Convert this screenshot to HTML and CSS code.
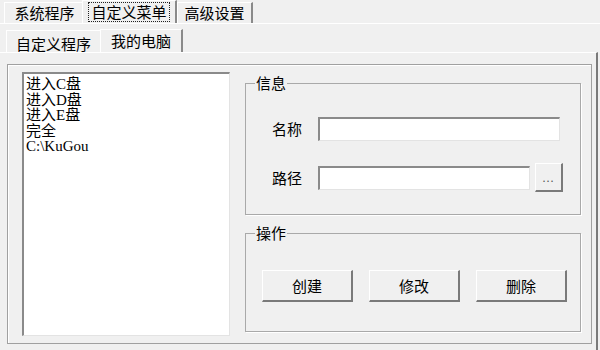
FILE: index.html
```html
<!DOCTYPE html>
<html lang="zh-CN">
<head>
    <meta charset="UTF-8">
    <title>自定义菜单</title>
    <link rel="stylesheet" href="styles.css">
</head>
<body>
    <!-- Top tab strip -->
    <div class="tabstrip tabstrip-top">
        <div class="tab tab-sys">系统程序</div>
        <div class="tab tab-menu active"><span class="focus">自定义菜单</span></div>
        <div class="tab tab-adv">高级设置</div>
    </div>

    <!-- Page of the selected tab -->
    <div class="page">
        <div class="tabstrip tabstrip-sub">
            <div class="tab tab-prog">自定义程序</div>
            <div class="tab tab-pc active">我的电脑</div>
        </div>

        <div class="sub-page">
            <div class="frame">
                <div class="listbox">
                    <div class="item">进入C盘</div>
                    <div class="item">进入D盘</div>
                    <div class="item">进入E盘</div>
                    <div class="item">完全</div>
                    <div class="item">C:\KuGou</div>
                </div>

                <div class="side">
                    <fieldset class="group group-info">
                        <legend>信息</legend>
                        <div class="row">
                            <span class="label">名称</span>
                            <div class="input input-name"></div>
                        </div>
                        <div class="row row-path">
                            <span class="label">路径</span>
                            <div class="input input-path"></div>
                            <div class="btn btn-browse">...</div>
                        </div>
                    </fieldset>

                    <fieldset class="group group-ops">
                        <legend>操作</legend>
                        <div class="buttons">
                            <div class="btn">创建</div>
                            <div class="btn">修改</div>
                            <div class="btn">删除</div>
                        </div>
                    </fieldset>
                </div>
            </div>
        </div>
    </div>
</body>
</html>
```

FILE: styles.css
```css
/* Basic reset */
* {
    margin: 0;
    padding: 0;
    box-sizing: border-box;
}

html, body {
    width: 600px;
    height: 350px;
    overflow: hidden;
}

body {
    font-family: "Noto Sans CJK SC", sans-serif;
    font-size: 15px;
    color: #000;
    background-color: #f0f0f0; /* classic dialog grey */
    display: flex;
    flex-direction: column;
}

/* Tab strips */
.tabstrip {
    display: flex;
    align-items: flex-end;
}

.tabstrip-top {
    height: 24px;
    padding-left: 4px;
    border-bottom: 1px solid #fff;
}

.tab {
    display: flex;
    align-items: center;
    justify-content: center;
    height: 21px;
    line-height: 18px;
    border-top: 1px solid #fff;
    border-left: 1px solid #fff;
    border-right: 2px solid #8a8a8a;
    white-space: nowrap;
}

.tab.active {
    height: 23px;
}

.tab-sys { width: 78px; border-right: none; padding-left: 2px; }
.tab-menu { width: 95px; }
.tab-adv { width: 76px; }

/* Dotted focus rectangle on the selected tab */
.focus {
    outline: 1px dotted #222;
    padding: 0 2px;
}

/* Page below the top tabs */
.page {
    flex: 1;
    display: flex;
    flex-direction: column;
}

.tabstrip-sub {
    height: 28px;
    padding-left: 6px;
}

.tab-prog {
    width: 94px;
    height: 22px;
    border-right: none;
    padding-top: 4px;
}

.tab-pc {
    width: 83px;
    height: 24px;
}

.sub-page {
    flex: 1;
    display: flex;
    flex-direction: column;
    width: 598px;
    border-top: 1px solid #fff;
    border-right: 2px solid #7a7a7a;
    padding: 11px 4px 6px 7px;
}

/* Etched frame holding list and groups */
.frame {
    flex: 1;
    display: flex;
    border: 1px solid #a0a0a0;
    box-shadow: inset 1px 1px 0 #fff;
    padding: 7px 10px 7px 14px;
}

/* Sunken list box */
.listbox {
    width: 208px;
    background-color: #fff;
    border-top: 2px solid #8a8a8a;
    border-left: 2px solid #8a8a8a;
    border-right: 1px solid #e3e3e3;
    border-bottom: 1px solid #e3e3e3;
    padding: 3px 2px;
    font-family: "Liberation Serif", "Noto Sans CJK SC", serif;
    font-size: 15px;
    line-height: 15.5px;
    color: #000;
}

/* Right column */
.side {
    width: 336px;
    margin-left: 15px;
    padding-top: 2px;
    display: flex;
    flex-direction: column;
    gap: 9px;
}

.group {
    border: 1px solid #a9a9a9;
    box-shadow: 1px 1px 0 #fff;
}

.group legend {
    padding: 0 1px;
    line-height: 18px;
}

.group-info {
    padding: 25px 0 22px 26px;
    display: flex;
    flex-direction: column;
    gap: 22px;
}

.group-info legend {
    margin-left: -17px;
}

.row {
    display: flex;
    align-items: center;
    height: 24px;
}

.row-path {
    height: 29px;
}

.label {
    width: 30px;
    margin-right: 16px;
    line-height: 18px;
}

/* Sunken text fields */
.input {
    height: 24px;
    background-color: #fff;
    border-top: 2px solid #8a8a8a;
    border-left: 2px solid #8a8a8a;
    border-right: 1px solid #e3e3e3;
    border-bottom: 1px solid #e3e3e3;
}

.input-name { width: 242px; }
.input-path { width: 212px; margin-right: 5px; }

/* Raised push buttons */
.btn {
    display: flex;
    align-items: center;
    justify-content: center;
    width: 91px;
    height: 32px;
    background-color: #f0f0f0;
    border-top: 1px solid #fff;
    border-left: 1px solid #fff;
    border-right: 2px solid #7a7a7a;
    border-bottom: 2px solid #7a7a7a;
    line-height: 18px;
}

.btn-browse {
    width: 28px;
    height: 29px;
    font-size: 11px;
    align-items: flex-end;
    padding-bottom: 4px;
    color: #555;
    letter-spacing: 1px;
}

.group-ops {
    padding: 28px 0 29px 16px;
}

.group-ops legend {
    margin-left: -7px;
}

.buttons {
    display: flex;
    gap: 16px;
}
```
